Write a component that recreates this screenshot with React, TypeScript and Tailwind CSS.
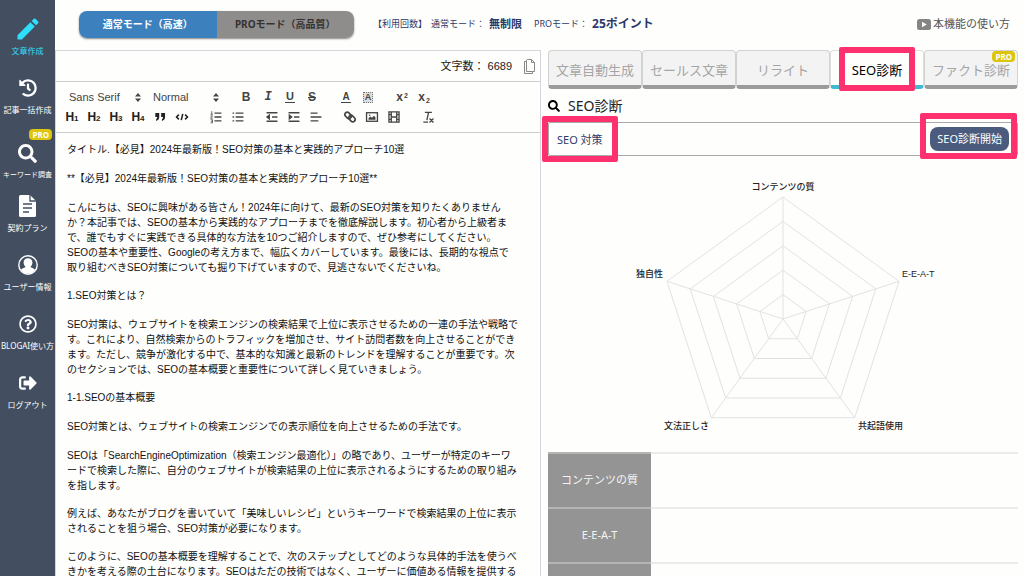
import type { ReactNode } from "react";
import { FaHistory, FaRegQuestionCircle, FaSearch, FaSignOutAlt } from "react-icons/fa";
import { MdEdit } from "react-icons/md";

const SIDE_ITEMS = [
  { label: "文章作成", icon: <MdEdit size={28} />, active: true },
  { label: "記事一括作成", icon: <FaHistory size={18} /> },
  { label: "キーワード調査", icon: <FaSearch size={19} />, pro: true },
  { label: "契約プラン", icon: <DocIcon /> },
  { label: "ユーザー情報", icon: <UserIcon /> },
  { label: "BLOGAI使い方", icon: <FaRegQuestionCircle size={18} /> },
  { label: "ログアウト", icon: <FaSignOutAlt size={18} /> },
];

const PARAGRAPHS = [
  "タイトル.【必見】2024年最新版！SEO対策の基本と実践的アプローチ10選",
  "**【必見】2024年最新版！SEO対策の基本と実践的アプローチ10選**",
  "こんにちは、SEOに興味がある皆さん！2024年に向けて、最新のSEO対策を知りたくありません\nか？本記事では、SEOの基本から実践的なアプローチまでを徹底解説します。初心者から上級者ま\nで、誰でもすぐに実践できる具体的な方法を10つご紹介しますので、ぜひ参考にしてください。\nSEOの基本や重要性、Googleの考え方まで、幅広くカバーしています。最後には、長期的な視点で\n取り組むべきSEO対策についても掘り下げていますので、見逃さないでくださいね。",
  "1.SEO対策とは？",
  "SEO対策は、ウェブサイトを検索エンジンの検索結果で上位に表示させるための一連の手法や戦略で\nす。これにより、自然検索からのトラフィックを増加させ、サイト訪問者数を向上させることができ\nます。ただし、競争が激化する中で、基本的な知識と最新のトレンドを理解することが重要です。次\nのセクションでは、SEOの基本概要と重要性について詳しく見ていきましょう。",
  "1-1.SEOの基本概要",
  "SEO対策とは、ウェブサイトの検索エンジンでの表示順位を向上させるための手法です。",
  "SEOは「SearchEngineOptimization（検索エンジン最適化）」の略であり、ユーザーが特定のキーワ\nードで検索した際に、自分のウェブサイトが検索結果の上位に表示されるようにするための取り組み\nを指します。",
  "例えば、あなたがブログを書いていて「美味しいレシピ」というキーワードで検索結果の上位に表示\nされることを狙う場合、SEO対策が必要になります。",
  "このように、SEOの基本概要を理解することで、次のステップとしてどのような具体的手法を使うべ\nきかを考える際の土台になります。SEOはただの技術ではなく、ユーザーに価値ある情報を提供する",
];

const TABS = [
  { label: "文章自動生成" },
  { label: "セールス文章" },
  { label: "リライト" },
  { label: "SEO診断", active: true },
  { label: "ファクト診断", pro: true },
];

const AXES = [
  { label: "コンテンツの質", x: 160, y: 18, anchor: "middle" as const },
  { label: "E-E-A-T", x: 279, y: 105, anchor: "start" as const },
  { label: "共起語使用", x: 235, y: 257, anchor: "start" as const },
  { label: "文法正しさ", x: 86, y: 257, anchor: "end" as const },
  { label: "独自性", x: 40, y: 105, anchor: "end" as const },
];

function DocIcon() {
  return (
    <svg width="17" height="22" viewBox="0 0 17 22" aria-hidden="true">
      <path d="M1.500 0H11L17 6V20.500Q17 22 15.500 22H1.500Q0 22 0 20.500V1.500Q0 0 1.500 0Z" fill="currentColor" />
      <path d="M11 0V6H17M4 9H13M4 13H13M4 17H10" stroke="#434f61" strokeWidth="1.300" fill="none" />
    </svg>
  );
}

function UserIcon() {
  return (
    <svg width="20" height="20" viewBox="0 0 20 20" aria-hidden="true">
      <circle cx="10" cy="10" r="9.200" fill="none" stroke="currentColor" strokeWidth="1.400" />
      <path d="M10 3.200C12.800 3.200 14.400 5 14.400 7.500C14.400 9.400 13.500 10.800 12.500 11.600C12.500 13 16 13 17 15A8.600 8.600 0 0 1 3 15C4 13 7.500 13 7.500 11.600C6.500 10.800 5.600 9.400 5.600 7.500C5.600 5 7.200 3.200 10 3.200Z" fill="currentColor" />
    </svg>
  );
}

function ProBadge() {
  return (
    <span className="flex h-[11px] items-center rounded-sm bg-[#ddc50d] px-[3px] text-[8px] leading-none font-bold text-white">
      PRO
    </span>
  );
}

function Sidebar() {
  return (
    <nav className="w-[55px] shrink-0 bg-[#434f61] text-white">
      {SIDE_ITEMS.map(item => (
        <a
          key={item.label}
          href="#"
          className={`relative flex h-[59px] flex-col items-center gap-[5px] ${item.pro ? "pt-6" : "pt-[18px]"} ${
            item.active ? "text-[#2fdffa]" : ""
          }`}
        >
          {item.pro && (
            <span className="absolute top-[11px] right-[3px]">
              <ProBadge />
            </span>
          )}
          <span className="flex h-[22px] shrink-0 items-center justify-center">{item.icon}</span>
          <span
            className={`leading-[11px] whitespace-nowrap ${item.label.length === 7 ? "text-[7px]" : "text-[8px]"}`}
          >
            {item.label}
          </span>
        </a>
      ))}
    </nav>
  );
}

function Header() {
  return (
    <header className="flex h-[50px] items-center pr-[14px] pl-6">
      <div className="mb-[2px] flex h-[27px] w-[275px] overflow-hidden rounded-lg text-[10px] font-bold shadow-[0_1px_2px_#888]">
        <button className="flex-1 bg-[#3d80be] text-white">通常モード（高速）</button>
        <button className="flex-1 bg-[#8f8d8b] text-[#333]">PROモード（高品質）</button>
      </div>
      <p className="mb-[2px] ml-[19px] flex items-center gap-1 text-[9px] whitespace-nowrap text-[#2b3a68]">
        <span>【利用回数】</span>
        <span>通常モード：</span>
        <strong className="mr-2 text-[11px]">無制限</strong>
        <span>PROモード：</span>
        <strong className="text-[12px]">25ポイント</strong>
      </p>
      <a href="#" className="mb-[2px] ml-auto flex items-center gap-[2px] text-[11px] text-[#555]">
        <svg width="14" height="11" viewBox="0 0 14 11" aria-hidden="true">
          <rect width="14" height="11" rx="2.500" fill="#858585" />
          <path d="M5 2.800L9.800 5.500L5 8.200Z" fill="#fff" />
        </svg>
        本機能の使い方
      </a>
    </header>
  );
}

function Tool({ label, children }: { label: string; children: ReactNode }) {
  return (
    <button aria-label={label} className="flex h-5 w-[22px] items-center justify-center text-[12px] leading-none">
      {children}
    </button>
  );
}

function Glyph({ children }: { children: ReactNode }) {
  return (
    <svg
      width="14"
      height="14"
      viewBox="0 0 18 18"
      fill="none"
      stroke="currentColor"
      strokeWidth="1.700"
      aria-hidden="true"
    >
      {children}
    </svg>
  );
}

function Picker({ label, className }: { label: string; className: string }) {
  return (
    <span className={`relative flex h-5 items-center ${className}`}>
      <select aria-label={label} className="h-full w-full appearance-none bg-transparent pl-2 text-[11px]">
        <option>{label}</option>
      </select>
      <svg width="6" height="9" viewBox="0 0 6 9" className="pointer-events-none absolute right-1" aria-hidden="true">
        <path d="M3 0L6 3.500H0ZM3 9L6 5.500H0Z" fill="currentColor" />
      </svg>
    </span>
  );
}

function Toolbar() {
  return (
    <div className="border-y border-[#ccc] py-[5px] pl-[5px] font-['Liberation_Sans','Noto_Sans_CJK_JP',sans-serif] text-[#444]">
      <div className="flex gap-3">
        <div className="flex">
          <Picker label="Sans Serif" className="w-[84px]" />
          <Picker label="Normal" className="w-[78px]" />
        </div>
        <div className="flex">
          <Tool label="Bold"><b>B</b></Tool>
          <Tool label="Italic"><b className="font-['Liberation_Mono',monospace] italic">I</b></Tool>
          <Tool label="Underline"><span className="border-b border-[#444] px-px pb-px text-[11px] leading-[10px] font-bold">U</span></Tool>
          <Tool label="Strike"><s className="font-bold">S</s></Tool>
        </div>
        <div className="flex">
          <Tool label="Color"><span className="border-b border-[#444] px-px pb-px text-[10px] leading-[9px] font-bold">A</span></Tool>
          <Tool label="Background"><span className="border border-dotted border-[#777] bg-[#ddd] px-px text-[9px] leading-[9px] font-bold">A</span></Tool>
        </div>
        <div className="flex">
          <Tool label="Superscript"><b>x<sup className="ml-px text-[7px]">2</sup></b></Tool>
          <Tool label="Subscript"><b>x<sub className="ml-px text-[7px]">2</sub></b></Tool>
        </div>
      </div>
      <div className="flex gap-3">
        <div className="flex text-[#222]">
          {[1, 2, 3, 4].map(n => (
            <Tool key={n} label={`Heading ${n}`}><b>H<sub className="bottom-0 text-[8px]">{n}</sub></b></Tool>
          ))}
          <Tool label="Quote">
            <Glyph>
              <path d="M3 4H8V9Q8 13 4 14V12Q5.500 11 5.500 9H3ZM10.500 4H15.500V9Q15.500 13 11.500 14V12Q13 11 13 9H10.500Z" fill="currentColor" stroke="none" />
            </Glyph>
          </Tool>
          <Tool label="Code"><Glyph><path d="M5 6L2 9L5 12M13 6L16 9L13 12M10 5L8 13" strokeWidth="2" /></Glyph></Tool>
        </div>
        <div className="flex">
          <Tool label="Ordered list">
            <Glyph>
              <path d="M7 4H16M7 9H16M7 14H16" />
              <path d="M3.500 1.500V5.500M2 5.500H5M2 7.500H4.500L2 10.500H5M2 12.500H4.500V16.500H2M2.500 14.500H4.500" strokeWidth="1" />
            </Glyph>
          </Tool>
          <Tool label="Bullet list"><Glyph><path d="M6 4H16M6 9H16M6 14H16M2 4H4M2 9H4M2 14H4" /></Glyph></Tool>
        </div>
        <div className="flex">
          <Tool label="Outdent">
            <Glyph><path d="M2 3.500H16M2 14.500H16M9 9H16" /><path d="M5.500 6.500V11.500L2.500 9Z" fill="currentColor" /></Glyph>
          </Tool>
          <Tool label="Indent">
            <Glyph><path d="M2 3.500H16M2 14.500H16M9 9H16" /><path d="M3 6.500V11.500L6 9Z" fill="currentColor" /></Glyph>
          </Tool>
          <Tool label="Align"><Glyph><path d="M2 4H11M2 9H16M2 14H12" /></Glyph></Tool>
        </div>
        <div className="flex">
          <Tool label="Link">
            <Glyph>
              <rect x="2" y="4" width="9" height="6" rx="3" transform="rotate(45 6.500 7)" strokeWidth="2.200" />
              <rect x="7" y="8" width="9" height="6" rx="3" transform="rotate(45 11.500 11)" strokeWidth="2.200" />
            </Glyph>
          </Tool>
          <Tool label="Image">
            <Glyph>
              <rect x="2" y="3.500" width="14" height="11" />
              <path d="M4.500 12.500V10.500L7 8.500L9 10L11.500 7.500L13.500 9.500V12.500Z" fill="currentColor" stroke="none" />
              <circle cx="6" cy="6.800" r="1" fill="currentColor" stroke="none" />
            </Glyph>
          </Tool>
          <Tool label="Video"><Glyph><path d="M2.500 2.500H15.500V15.500H2.500ZM5.500 2.500V15.500M12.500 2.500V15.500M5.500 9H12.500M2.500 6H5.500M2.500 12H5.500M12.500 6H15.500M12.500 12H15.500" /></Glyph></Tool>
        </div>
        <Tool label="Clear format">
          <Glyph><path d="M5 3H14M9.800 3L7.500 13M3 15.500H9M11 11L16 16M16 11L11 16" /></Glyph>
        </Tool>
      </div>
    </div>
  );
}

function Editor() {
  return (
    <section className="min-w-0 border-x border-t border-[#d3d6dc]">
      <div className="flex h-[30px] items-center justify-end gap-3 pr-[5px] font-['Liberation_Sans','Noto_Sans_CJK_JP',sans-serif] text-[11px] text-[#222]">
        <span>文字数： 6689</span>
        <button aria-label="コピー">
          <svg width="11" height="15" viewBox="0 0 11 15" fill="none" stroke="#888" aria-hidden="true">
            <path d="M3.500 .5H7.500L10.500 3.500V12.500H2.500V1.500Q2.500 .5 3.500 .5ZM7.500 .5V3.500H10.500M2.500 2.500H.5V14.500H8.500V12.500" />
          </svg>
        </button>
      </div>
      <Toolbar />
      <div
        contentEditable
        suppressContentEditableWarning
        role="textbox"
        aria-label="本文"
        className="pt-[9px] pl-[11px] font-['Liberation_Sans','Noto_Sans_CJK_JP',sans-serif] text-[10px] leading-[15px] whitespace-pre text-[#111] outline-none"
      >
        {PARAGRAPHS.map(text => (
          <p key={text} className={text.includes("\n") ? "mb-[13px]" : "mb-[14px]"}>
            {text}
          </p>
        ))}
      </div>
    </section>
  );
}

function Radar() {
  const ring = (r: number) =>
    AXES.map((_, i) => {
      const a = (i * 2 * Math.PI) / 5 - Math.PI / 2;
      return `${160 + r * Math.cos(a)},${147 + r * Math.sin(a)}`;
    });

  return (
    <svg width="320" height="270" viewBox="0 0 320 270" className="mx-auto mt-4" role="img" aria-label="SEO診断">
      <g fill="none" stroke="#e2e2e4">
        {[1, 2, 3, 4, 5].map(n => (
          <polygon key={n} points={ring(n * 24.4).join(" ")} />
        ))}
        {ring(122).map(p => (
          <polyline key={p} points={`160,147 ${p}`} />
        ))}
      </g>
      {AXES.map(axis => (
        <text
          key={axis.label}
          x={axis.x}
          y={axis.y}
          textAnchor={axis.anchor}
          className="fill-[#222] font-['Liberation_Sans','Noto_Sans_CJK_JP',sans-serif] text-[9px] font-medium"
        >
          {axis.label}
        </text>
      ))}
    </svg>
  );
}

function Marker({ className }: { className: string }) {
  return <span className={`pointer-events-none absolute z-10 rounded-xs border-[6px] border-[#fd316e] ${className}`} />;
}

function Diagnosis() {
  return (
    <section className="min-w-0 pr-[6px] pl-[7px]">
      <div className="flex" role="tablist">
        {TABS.map(tab => (
          <button
            key={tab.label}
            role="tab"
            aria-selected={!!tab.active}
            className={`relative h-[39px] flex-1 rounded-sm border border-b-4 pt-1 text-[13px] leading-none whitespace-nowrap ${
              tab.active
                ? "border-[#ddd] border-b-[#42b8d3] text-black"
                : "border-[#d2d2d2] border-b-[#9b9b9b] bg-[#f3f3f3] text-[#a5a5a5]"
            }`}
          >
            {tab.label}
            {tab.pro && (
              <span className="absolute top-0 right-[2px]">
                <ProBadge />
              </span>
            )}
            {tab.active && <Marker className="-top-1 -bottom-[6px] inset-x-2" />}
          </button>
        ))}
      </div>

      <h1 className="flex h-[33px] items-center gap-2 text-[14px] text-[#222]">
        <FaSearch size={12} className="text-black" />
        SEO診断
      </h1>

      <form className="relative flex h-[34px] items-center rounded-xs border border-[#aaa] pr-2" onSubmit={e => e.preventDefault()}>
        <input
          aria-label="キーワード"
          defaultValue="SEO 対策"
          className="h-full min-w-0 flex-1 bg-transparent pl-2 text-[11px] text-[#2b3a68] outline-none"
        />
        <button className="h-6 rounded-lg bg-[#4a5b7d] px-[7px] text-[11px] text-white">SEO診断開始</button>
        <Marker className="-inset-y-[7px] -left-[7px] w-[76px]" />
        <Marker className="-top-[10px] -bottom-[4px] right-0 w-[97px]" />
      </form>

      <Radar />

      <table className="mt-[10px] w-full text-[11px]">
        <tbody>
          {["コンテンツの質", "E-E-A-T", ""].map(name => (
            <tr key={name} className="h-[55px] border-t-2 border-[#ececec]">
              <th className="w-[103px] border-t-2 border-[#b5b5b5] bg-[#949494] font-normal text-[#f4f4f4]">{name}</th>
              <td />
            </tr>
          ))}
        </tbody>
      </table>
    </section>
  );
}

export default function App() {
  return (
    <div className="flex h-screen overflow-hidden bg-[#fefefd] font-['Noto_Sans','Noto_Sans_CJK_JP',sans-serif]">
      <Sidebar />
      <main className="min-w-0 flex-1">
        <Header />
        <div className="grid grid-cols-[486fr_483fr]">
          <Editor />
          <Diagnosis />
        </div>
      </main>
    </div>
  );
}
